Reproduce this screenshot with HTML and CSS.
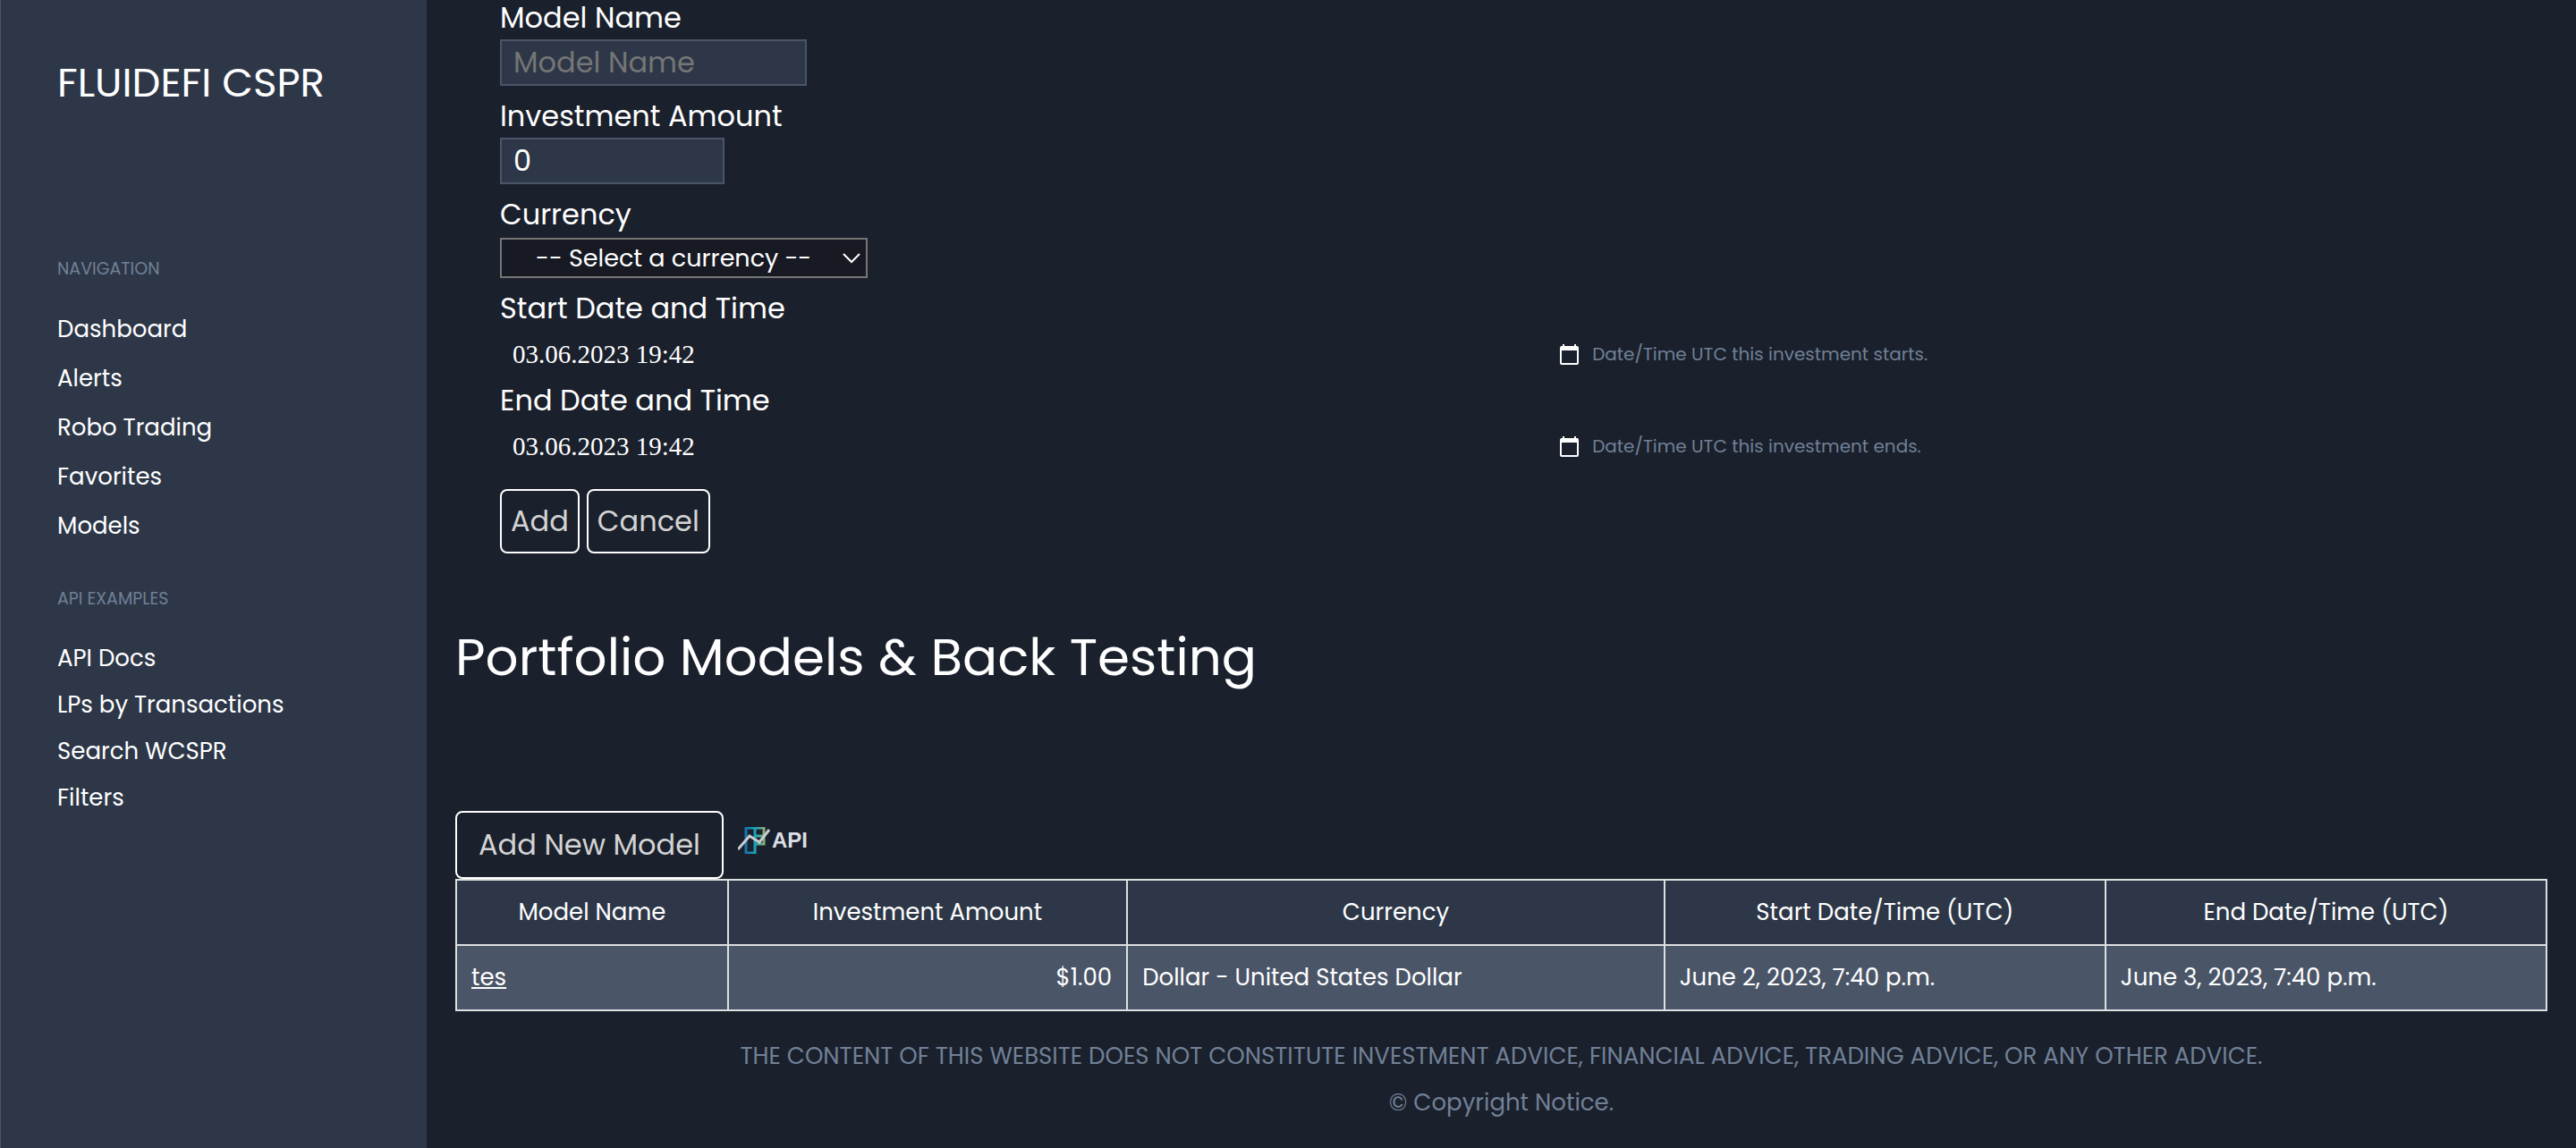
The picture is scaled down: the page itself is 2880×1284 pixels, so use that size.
FILE: index.html
```html
<!DOCTYPE html>
<html lang="en">
<head>
  <meta charset="utf-8">
  <meta name="viewport" content="width=device-width, initial-scale=1">
  <title>Portfolio Models - FLUIDEFI CSPR</title>
  <link rel="stylesheet" href="styles.css">
</head>
<body>
  <div class="layout">
    <aside class="sidebar">
      <p class="brand">FLUIDEFI CSPR</p>
      <nav class="menu" aria-label="Main">
        <h2 class="menu-title">NAVIGATION</h2>
        <ul class="menu-list">
          <li><a href="#dashboard">Dashboard</a></li>
          <li><a href="#alerts">Alerts</a></li>
          <li><a href="#robo">Robo Trading</a></li>
          <li><a href="#favorites">Favorites</a></li>
          <li><a href="#models">Models</a></li>
        </ul>
        <h2 class="menu-title">API EXAMPLES</h2>
        <ul class="menu-list menu-list-tight">
          <li><a href="#docs">API Docs</a></li>
          <li><a href="#lps">LPs by Transactions</a></li>
          <li><a href="#search">Search WCSPR</a></li>
          <li><a href="#filters">Filters</a></li>
        </ul>
      </nav>
    </aside>

    <main class="content">
      <form class="model-form">
        <div class="field">
          <label for="name">Model Name</label>
          <input class="text-input name-input" id="name" type="text" placeholder="Model Name">
        </div>
        <div class="field">
          <label for="amount">Investment Amount</label>
          <input class="text-input amount-input" id="amount" type="text" inputmode="decimal" value="0">
        </div>
        <div class="field">
          <label for="currency">Currency</label>
          <select class="currency-select" id="currency">
            <option>-- Select a currency --</option>
            <option>Dollar - United States Dollar</option>
          </select>
        </div>
        <div class="field field-date">
          <label for="start">Start Date and Time</label>
          <div class="date-row">
            <div class="date-box">
              <input class="date-input" id="start" type="text" value="03.06.2023 19:42">
              <button class="date-button" type="button" aria-label="Pick start date">
                <svg class="date-icon" viewBox="0 0 21 23" aria-hidden="true"><path fill-rule="evenodd" d="M3 0h2v2h11V0h2v2h1a2 2 0 0 1 2 2v17a2 2 0 0 1-2 2H2a2 2 0 0 1-2-2V4a2 2 0 0 1 2-2h1zM2 7v14h17V7z"/></svg>
              </button>
            </div>
            <span class="hint">Date/Time UTC this investment starts.</span>
          </div>
        </div>
        <div class="field field-date">
          <label for="end">End Date and Time</label>
          <div class="date-row">
            <div class="date-box">
              <input class="date-input" id="end" type="text" value="03.06.2023 19:42">
              <button class="date-button" type="button" aria-label="Pick end date">
                <svg class="date-icon" viewBox="0 0 21 23" aria-hidden="true"><path fill-rule="evenodd" d="M3 0h2v2h11V0h2v2h1a2 2 0 0 1 2 2v17a2 2 0 0 1-2 2H2a2 2 0 0 1-2-2V4a2 2 0 0 1 2-2h1zM2 7v14h17V7z"/></svg>
              </button>
            </div>
            <span class="hint">Date/Time UTC this investment ends.</span>
          </div>
        </div>
        <div class="actions">
          <button class="button" type="submit">Add</button>
          <button class="button" type="button">Cancel</button>
        </div>
      </form>

      <h1 class="page-title">Portfolio Models &amp; Back Testing</h1>

      <div class="toolbar">
        <button class="button button-wide" type="button">Add New Model</button>
        <a class="api-link" href="#api">
          <svg class="api-icon" viewBox="0 0 36 30" aria-hidden="true">
            <defs>
              <linearGradient id="bars" gradientUnits="userSpaceOnUse" x1="8" x2="30" y1="0" y2="0">
                <stop offset="0" stop-color="#1b70b0"/>
                <stop offset="0.5" stop-color="#16a5b8"/>
                <stop offset="1" stop-color="#8fae72"/>
              </linearGradient>
            </defs>
            <path d="M9 1h10v28H9zM19 1h10v18H19zM19 10h10" fill="none" stroke="url(#bars)" stroke-width="3"/>
            <path d="M0 25 13 10l11 7L35 3" fill="none" stroke="#c9cdd2" stroke-width="3"/>
          </svg>
          <span>API</span>
        </a>
      </div>

      <table class="models">
        <colgroup>
          <col class="col-name"><col class="col-amount"><col class="col-currency"><col class="col-start"><col class="col-end">
        </colgroup>
        <thead>
          <tr><th>Model Name</th><th>Investment Amount</th><th>Currency</th><th>Start Date/Time (UTC)</th><th>End Date/Time (UTC)</th></tr>
        </thead>
        <tbody>
          <tr>
            <td><a href="#tes">tes</a></td>
            <td class="number">$1.00</td>
            <td>Dollar - United States Dollar</td>
            <td>June 2, 2023, 7:40 p.m.</td>
            <td>June 3, 2023, 7:40 p.m.</td>
          </tr>
        </tbody>
      </table>

      <footer class="footer">
        <p>THE CONTENT OF THIS WEBSITE DOES NOT CONSTITUTE INVESTMENT ADVICE, FINANCIAL ADVICE, TRADING ADVICE, OR ANY OTHER ADVICE.</p>
        <p>© Copyright Notice.</p>
      </footer>
    </main>
  </div>
</body>
</html>
```
FILE: styles.css
```css
* {
  box-sizing: border-box;
}

body {
  margin: 0;
  background: #1a202c;
  color: #fff;
  font-family: Poppins, Inter, "Liberation Sans", sans-serif;
  font-size: 26px;
}

input,
select,
button {
  font-family: inherit;
  color: inherit;
}

.layout {
  display: flex;
  min-height: 100vh;
}

/* Sidebar */

.sidebar {
  flex: 0 0 477px;
  padding: 60px 32px 0 63px;
  border-left: 1px solid #4a5568;
  background: #2d3748;
}

.brand {
  margin: 0 0 155px;
  font-size: 45px;
  line-height: 66px;
}

.menu-title {
  margin: 0;
  color: #718096;
  font-size: 19px;
  font-weight: 400;
  line-height: 40px;
}

.menu-list {
  margin: 20px 0 34px;
  padding: 0;
  list-style: none;
  line-height: 55px;
}

.menu-list-tight {
  line-height: 52px;
}

.menu-list a {
  color: inherit;
  text-decoration: none;
}

/* Content */

.content {
  flex: 1;
  min-width: 0;
  padding: 0 32px;
}

.model-form {
  padding-left: 50px;
}

.field {
  margin-bottom: 14px;
}

.field label {
  display: block;
  margin-bottom: 4px;
  font-size: 32px;
  line-height: 40px;
}

.text-input {
  display: block;
  height: 52px;
  padding: 0 13px;
  border: 2px solid #4a5568;
  background: #2d3748;
  font-size: 32px;
}

.text-input::placeholder {
  color: #757575;
}

.name-input {
  width: 343px;
}

.amount-input {
  width: 251px;
}

.currency-select {
  display: block;
  width: 411px;
  height: 45px;
  margin-top: 6px;
  padding: 0 60px 0 38px;
  border: 2px solid #767676;
  appearance: none;
  background: #171923 url("data:image/svg+xml,%3Csvg xmlns='http://www.w3.org/2000/svg' viewBox='0 0 20 12'%3E%3Cpath d='M1 1l9 9 9-9' fill='none' stroke='white' stroke-width='2'/%3E%3C/svg%3E") no-repeat right 6px center / 20px 12px;
  font-size: 27px;
}

.field-date {
  margin-bottom: 5px;
}

.date-row {
  display: flex;
  align-items: center;
  gap: 8px;
  height: 54px;
}

.date-box {
  display: flex;
  align-items: center;
  width: 53%;
  padding: 0 7px 0 14px;
}

.date-input {
  flex: 1;
  min-width: 0;
  padding: 0;
  border: 0;
  background: none;
  font-family: "Liberation Serif", serif;
  font-size: 29px;
}

.date-button {
  display: flex;
  padding: 0;
  border: 0;
  background: none;
}

.date-icon {
  width: 21px;
  height: 23px;
  fill: #fff;
}

.hint {
  color: #718096;
  font-size: 20px;
}

.actions {
  display: flex;
  gap: 8px;
  padding-top: 16px;
}

.button {
  height: 72px;
  padding: 0 10px;
  border: 2px solid #fff;
  border-radius: 8px;
  background: none;
  color: #d3d3d3;
  font-size: 32px;
}

.button-wide {
  height: 76px;
  padding: 0 24px;
}

.page-title {
  margin: 80px 0 136px;
  font-size: 58px;
  font-weight: 400;
  line-height: 72px;
}

.toolbar {
  display: flex;
  gap: 16px;
}

.api-link {
  display: flex;
  align-items: center;
  gap: 2px;
  height: 66px;
  color: #dcdfe3;
  font-family: "Liberation Sans", Arial, sans-serif;
  font-size: 24px;
  font-weight: 700;
  text-decoration: none;
}

.api-icon {
  width: 36px;
  height: 30px;
}

/* Table */

.models {
  width: 100%;
  border-collapse: collapse;
  table-layout: fixed;
}

.models th,
.models td {
  height: 73px;
  padding: 0 16px;
  border: 2px solid #dddfe0;
  font-weight: 400;
  text-align: left;
}

.models th {
  background: #2d3748;
  text-align: center;
}

.models td {
  background: #4a5568;
}

.models .number {
  text-align: right;
}

.models a {
  color: inherit;
}

.col-name {
  width: 13%;
}

.col-amount {
  width: 19.1%;
}

.col-currency {
  width: 25.7%;
}

.col-start {
  width: 21.1%;
}

.col-end {
  width: 21.1%;
}

.footer {
  padding-top: 24px;
  color: #718096;
  line-height: 52px;
  text-align: center;
}

.footer p {
  margin: 0;
}
```
